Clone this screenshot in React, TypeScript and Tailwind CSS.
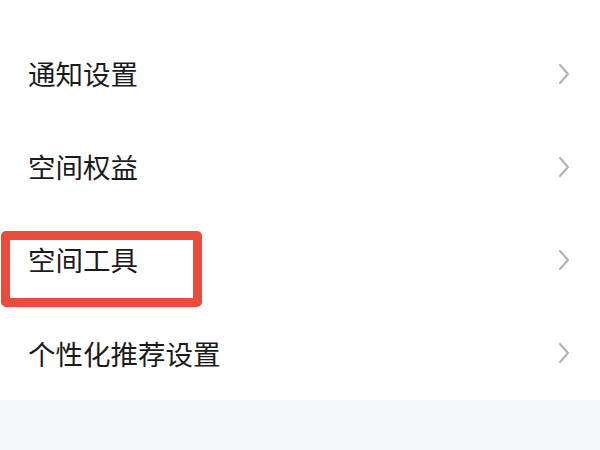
const rows = ["通知设置", "空间权益", "空间工具", "个性化推荐设置"];

function Chevron() {
  return (
    <svg width="12" height="22" viewBox="0 0 12 22" fill="none" className="shrink-0">
      <path d="M2 2 L10 11 L2 20" stroke="#b3b3b3" strokeWidth="2.2" strokeLinecap="round" strokeLinejoin="round" />
    </svg>
  );
}

export default function App() {
  return (
    <div
      className="flex h-[450px] w-[600px] flex-col overflow-hidden bg-[#f6f7f9]"
      style={{ fontFamily: '"Noto Sans CJK SC", "Noto Sans", sans-serif' }}
    >
      <div className="bg-white pt-[27px]">
        {rows.map((label) => (
          <div key={label} className="relative flex h-[93.25px] items-center justify-between pl-[28px] pr-[30px]">
            {label === "空间工具" && (
              <div className="absolute left-[1px] top-[17px] h-[76px] w-[201px] rounded-[5px] border-[9px] border-[#e84c3d]" />
            )}
            <span className="text-[27.5px] leading-none text-[#1b1b1b]">{label}</span>
            <Chevron />
          </div>
        ))}
      </div>
    </div>
  );
}
